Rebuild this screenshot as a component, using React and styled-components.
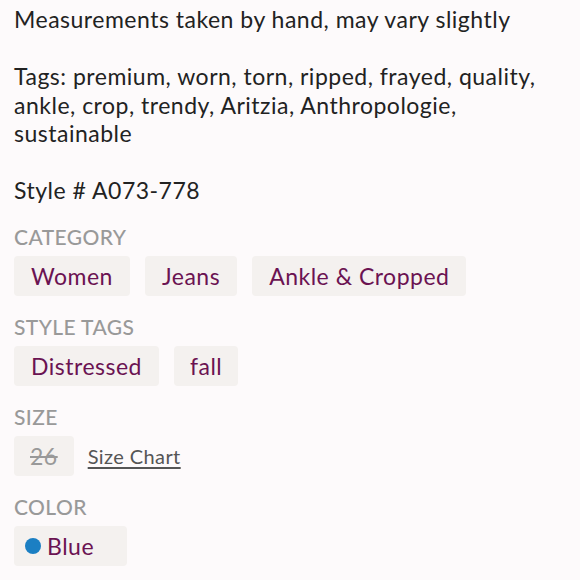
import React from "react";
import styled, { createGlobalStyle } from "styled-components";

const Global = createGlobalStyle`
  html, body {
    margin: 0;
    padding: 0;
    background: #fdfafb;
  }
  body {
    font-family: Lato, "Noto Sans", sans-serif;
  }
`;

const Page = styled.div`
  padding: 5px 14px 0 14px;
`;

const Description = styled.div`
  font-size: 23px;
  line-height: 28.5px;
  letter-spacing: 0.5px;
  color: #222;
  white-space: pre-line;
`;

const Section = styled.div`
  margin-top: ${(p) => p.$top || 19}px;
`;

const Label = styled.div`
  font-size: 21px;
  line-height: 24px;
  letter-spacing: 0.4px;
  font-weight: 500;
  color: #999;
  text-transform: uppercase;
`;

const Row = styled.div`
  display: flex;
  align-items: center;
  gap: ${(p) => p.$gap || 15}px;
  margin-top: 7px;
`;

const Chip = styled.div`
  display: flex;
  align-items: center;
  height: 40px;
  padding: 0 ${(p) => p.$pad || 17}px;
  background: #f4f1ef;
  border-radius: 4px;
  font-size: 23px;
  letter-spacing: 0.5px;
  color: ${(p) => (p.$muted ? "#999" : "#6b1352")};
  text-decoration: ${(p) => (p.$muted ? "line-through" : "none")};
`;

const ColorChip = styled(Chip)`
  padding: 0 33px 0 11px;
  gap: 6px;
`;

const Dot = styled.span`
  width: 16px;
  height: 16px;
  border-radius: 50%;
  background: ${(p) => p.$color};
`;

const Link = styled.a`
  font-size: 20px;
  letter-spacing: 0.4px;
  color: #555;
  text-decoration: underline;
  text-underline-offset: 3px;
  cursor: pointer;
`;

export default function App() {
  const text =
    "Measurements taken by hand, may vary slightly\n\nTags: premium, worn, torn, ripped, frayed, quality,\nankle, crop, trendy, Aritzia, Anthropologie,\nsustainable\n\nStyle # A073-778";
  return (
    <>
      <Global />
      <Page>
        <Description>{text}</Description>
        <Section $top={20}>
          <Label>Category</Label>
          <Row>
            <Chip>Women</Chip>
            <Chip>Jeans</Chip>
            <Chip>Ankle &amp; Cropped</Chip>
          </Row>
        </Section>
        <Section>
          <Label>Style Tags</Label>
          <Row>
            <Chip>Distressed</Chip>
            <Chip $pad={16}>fall</Chip>
          </Row>
        </Section>
        <Section>
          <Label>Size</Label>
          <Row $gap={14}>
            <Chip $muted $pad={16}>26</Chip>
            <Link>Size Chart</Link>
          </Row>
        </Section>
        <Section>
          <Label>Color</Label>
          <Row>
            <ColorChip>
              <Dot $color="#1b7fc3" />
              Blue
            </ColorChip>
          </Row>
        </Section>
      </Page>
    </>
  );
}
